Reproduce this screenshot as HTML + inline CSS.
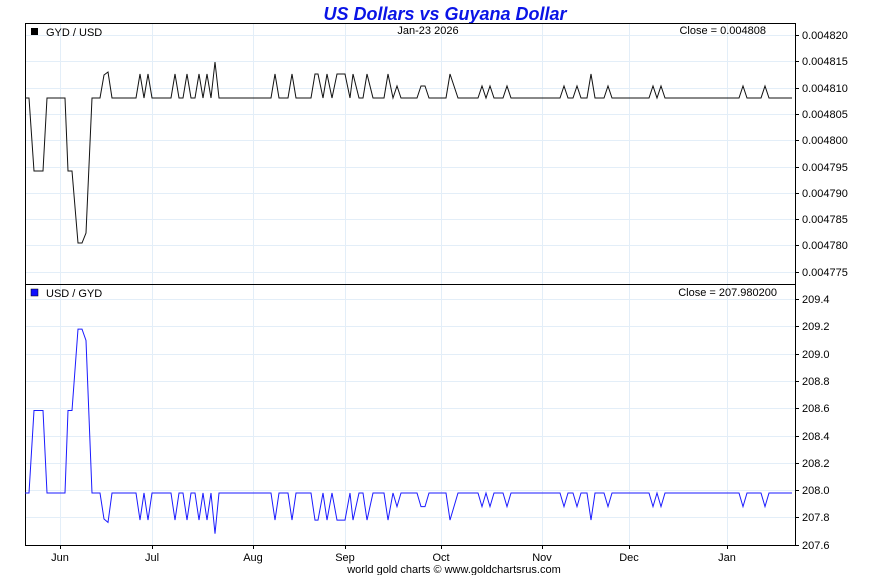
<!DOCTYPE html>
<html><head><meta charset="utf-8"><style>
body{margin:0;background:#fff;width:890px;height:575px;overflow:hidden;font-family:"Liberation Sans",Arial,sans-serif}
svg{display:block}
</style></head><body>
<svg id="s" width="890" height="575" xmlns="http://www.w3.org/2000/svg" font-family="Liberation Sans, Arial, sans-serif">
<text x="445" y="20" text-anchor="middle" font-size="18" font-weight="bold" font-style="italic" fill="#0a14e6">US Dollars vs Guyana Dollar</text>
<g id="grid" stroke="#e3eef8" stroke-width="1"></g>
<rect x="25.5" y="23.5" width="770" height="522" fill="none" stroke="#000"/>
<line x1="25" y1="284.5" x2="796" y2="284.5" stroke="#000"/>
<g id="ax" font-size="11" fill="#000"></g>
<rect x="31" y="28" width="7" height="7" fill="#000"/>
<text x="46" y="36" font-size="11">GYD / USD</text>
<text x="428" y="34" font-size="11" text-anchor="middle">Jan-23  2026</text>
<text x="766" y="34" font-size="11" text-anchor="end">Close = 0.004808</text>
<rect x="31" y="289" width="7" height="7" fill="#1010ff" stroke="#000" stroke-width="0.5"/>
<text x="46" y="297" font-size="11">USD / GYD</text>
<text x="777" y="296" font-size="11" text-anchor="end">Close = 207.980200</text>
<polyline id="p1" fill="none" stroke="#111" stroke-width="1"/>
<polyline id="p2" fill="none" stroke="#1a1aff" stroke-width="1"/>
<text x="454" y="573" font-size="11" text-anchor="middle">world gold charts © www.goldchartsrus.com</text>
</svg>
<script>
var NS="http://www.w3.org/2000/svg";
function el(p,t,a,txt){var e=document.createElementNS(NS,t);for(var k in a)e.setAttribute(k,a[k]);if(txt)e.textContent=txt;document.getElementById(p).appendChild(e);}
var vx=[60,152,253,345,441,542,629,727],mn=["Jun","Jul","Aug","Sep","Oct","Nov","Dec","Jan"];
vx.forEach(function(x,i){el("grid","line",{x1:x+.5,y1:24,x2:x+.5,y2:545});el("ax","text",{x:x,y:561,"text-anchor":"middle"},mn[i]);el("ax","line",{x1:x+.5,y1:545,x2:x+.5,y2:549,stroke:"#000"});});
var tl=["0.004820","0.004815","0.004810","0.004805","0.004800","0.004795","0.004790","0.004785","0.004780","0.004775"];
tl.forEach(function(t,i){var y=Math.round(35+i*26.3);el("grid","line",{x1:25,y1:y+.5,x2:795,y2:y+.5});el("ax","line",{x1:795,y1:y+.5,x2:799,y2:y+.5,stroke:"#000"});el("ax","text",{x:802,y:y+4},t);});
var bl=["209.4","209.2","209.0","208.8","208.6","208.4","208.2","208.0","207.8","207.6"];
bl.forEach(function(t,i){var y=Math.round(299+i*27.3);el("grid","line",{x1:25,y1:y+.5,x2:795,y2:y+.5});el("ax","line",{x1:795,y1:y+.5,x2:799,y2:y+.5,stroke:"#000"});el("ax","text",{x:802,y:y+4},t);});
var B=98,H=74,S=86;
var pts=[[25,B],[29,B],[34,171],[43,171],[47,B],[65,B],[68,171],[72,171],[78,243],[82,243],[86,233],[92,B],[100,B],[104,75],[108,72],[112,B],[136,B],[140,H],[144,B],[148,H],[152,B],[171,B],[175,H],[179,B],[183,B],[187,H],[191,B],[195,B],[199,H],[203,B],[207,H],[211,B],[215,62],[219,B],
[271,B],[275,H],[279,B],[288,B],[292,H],[296,B],[311,B],[315,H],[318,H],[323,B],[327,H],[332,B],[337,H],[345,H],[350,B],[353,H],[359,B],[363,B],[367,H],[373,B],[384,B],[388,H],[393,B],[397,S],[401,B],[417,B],[421,S],[425,S],[429,B],[446,B],[450,H],[458,B],[478,B],[482,S],[486,B],[490,S],[494,B],[503,B],[507,S],[511,B],[560,B],[564,S],[568,B],[573,B],[577,S],[581,B],[587,B],[591,H],[595,B],[604,B],[608,S],[612,B],[649,B],[653,S],[657,B],[661,S],[665,B],[739,B],[743,S],[747,B],[761,B],[765,S],[769,B],[792,B]];
document.getElementById("p1").setAttribute("points",pts.map(function(p){return p[0]+","+p[1]}).join(" "));
document.getElementById("p2").setAttribute("points",pts.map(function(p){return p[0]+","+(493+(B-p[1])*1.13).toFixed(1)}).join(" "));
</script>
</body></html>
